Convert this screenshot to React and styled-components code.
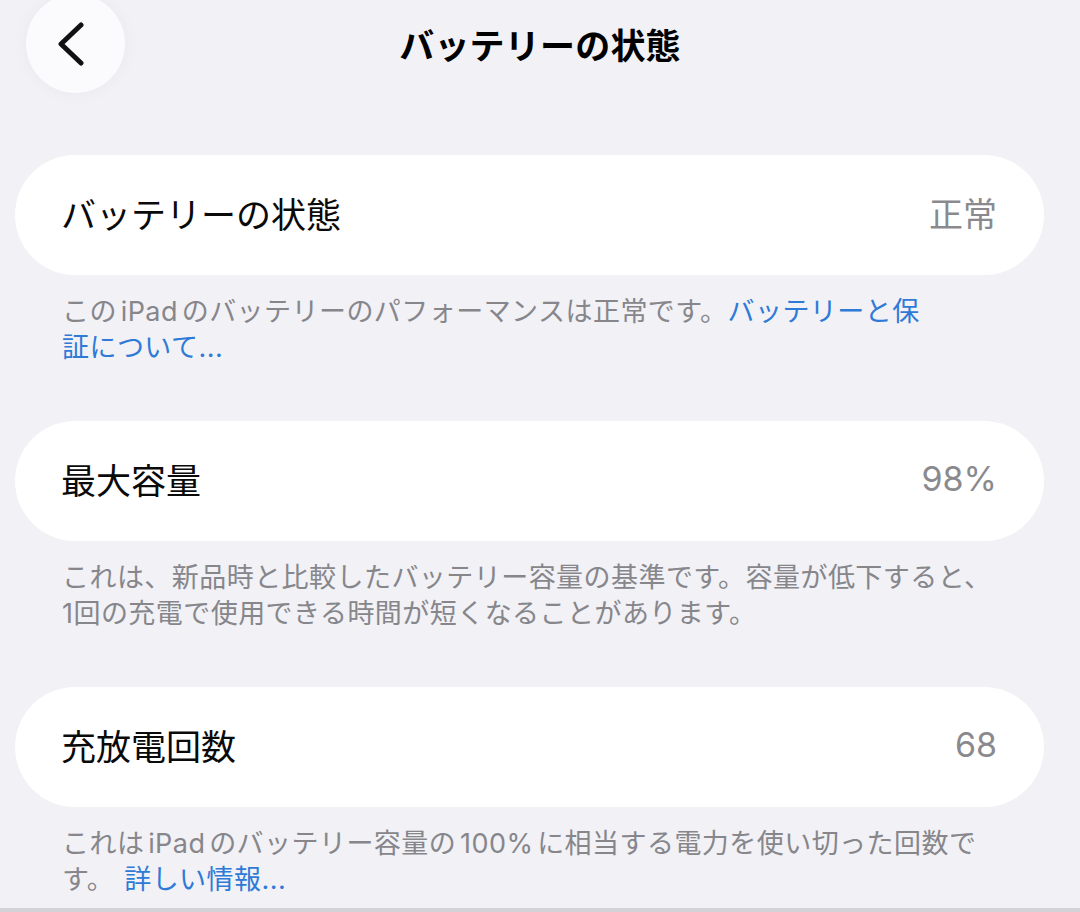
import React from "react";
import styled, { createGlobalStyle } from "styled-components";

const Global = createGlobalStyle`
  html, body { margin: 0; padding: 0; background: #f1f1f6; }
  body { font-family: "Inter", "Noto Sans CJK JP", sans-serif; -webkit-font-smoothing: antialiased; }
`;

const Page = styled.div`
  width: 1080px;
  height: 912px;
  box-sizing: border-box;
  background: #f1f1f6;
  border-bottom: 4px solid #d2d2d7;
  overflow: hidden;
  display: flex;
  flex-direction: column;
`;

const Header = styled.header`
  display: grid;
  grid-template-columns: 1fr auto 1fr;
  align-items: center;
  padding: 0 26px;
  margin-top: -6px;
  height: 99px;
`;

const BackButton = styled.button`
  width: 99px;
  height: 99px;
  border-radius: 50%;
  border: none;
  background: #fbfbfd;
  box-shadow: 0 0 18px rgba(0, 0, 0, 0.04);
  display: flex;
  align-items: center;
  justify-content: center;
  padding: 0 9px 0 0;
  justify-self: start;
`;

const Title = styled.h1`
  margin: 0;
  font-family: "Inter", "Noto Sans CJK JP", sans-serif;
  font-size: 35px;
  font-weight: 700;
  color: #000;
  letter-spacing: 0.2px;
`;

const Content = styled.main`
  display: flex;
  flex-direction: column;
  gap: 55px;
  padding: 62px 36px 0 15px;
`;

const Group = styled.section`
  display: flex;
  flex-direction: column;
`;

const Card = styled.div`
  height: 120px;
  box-sizing: border-box;
  border-radius: 60px;
  background: #ffffff;
  display: flex;
  align-items: center;
  justify-content: space-between;
  padding: 0 47px 5px;
`;

const Label = styled.span`
  font-size: 35px;
  color: #0a0a0a;
  margin-left: -1px;
`;

const Value = styled.span`
  font-size: 34px;
  color: #8a8a8e;
`;

const Note = styled.p`
  margin: 0;
  padding: 19px 0 0 47px;
  font-size: 27px;
  line-height: 36px;
  letter-spacing: 0.45px;
  color: #86868b;
  white-space: nowrap;
`;

const Latin = styled.span`
  margin: 0 0.14em;
`;

const Link = styled.a`
  color: #2e7ad6;
  text-decoration: none;
  margin-left: ${(p) => p.$gap || 0}px;
`;

const Chevron = () => (
  <svg width="30" height="44" viewBox="0 0 30 44" fill="none">
    <path d="M25 3 L5 22 L25 41" stroke="#111" strokeWidth="5" strokeLinecap="round" strokeLinejoin="round" />
  </svg>
);

export default function App() {
  return (
    <>
      <Global />
      <Page>
        <Header>
          <BackButton aria-label="戻る">
            <Chevron />
          </BackButton>
          <Title>バッテリーの状態</Title>
          <span />
        </Header>
        <Content>
          <Group>
            <Card>
              <Label>バッテリーの状態</Label>
              <Value>正常</Value>
            </Card>
            <Note>
              この<Latin>iPad</Latin>のバッテリーのパフォーマンスは正常です。<Link href="#">バッテリーと保</Link>
              <br />
              <Link href="#">証について...</Link>
            </Note>
          </Group>
          <Group>
            <Card>
              <Label>最大容量</Label>
              <Value>98%</Value>
            </Card>
            <Note>
              これは、新品時と比較したバッテリー容量の基準です。容量が低下すると、
              <br />
              1回の充電で使用できる時間が短くなることがあります。
            </Note>
          </Group>
          <Group>
            <Card>
              <Label>充放電回数</Label>
              <Value>68</Value>
            </Card>
            <Note>
              これは<Latin>iPad</Latin>のバッテリー容量の<Latin>100%</Latin>に相当する電力を使い切った回数で
              <br />
              す。<Link href="#" $gap={10}>詳しい情報...</Link>
            </Note>
          </Group>
        </Content>
      </Page>
    </>
  );
}
